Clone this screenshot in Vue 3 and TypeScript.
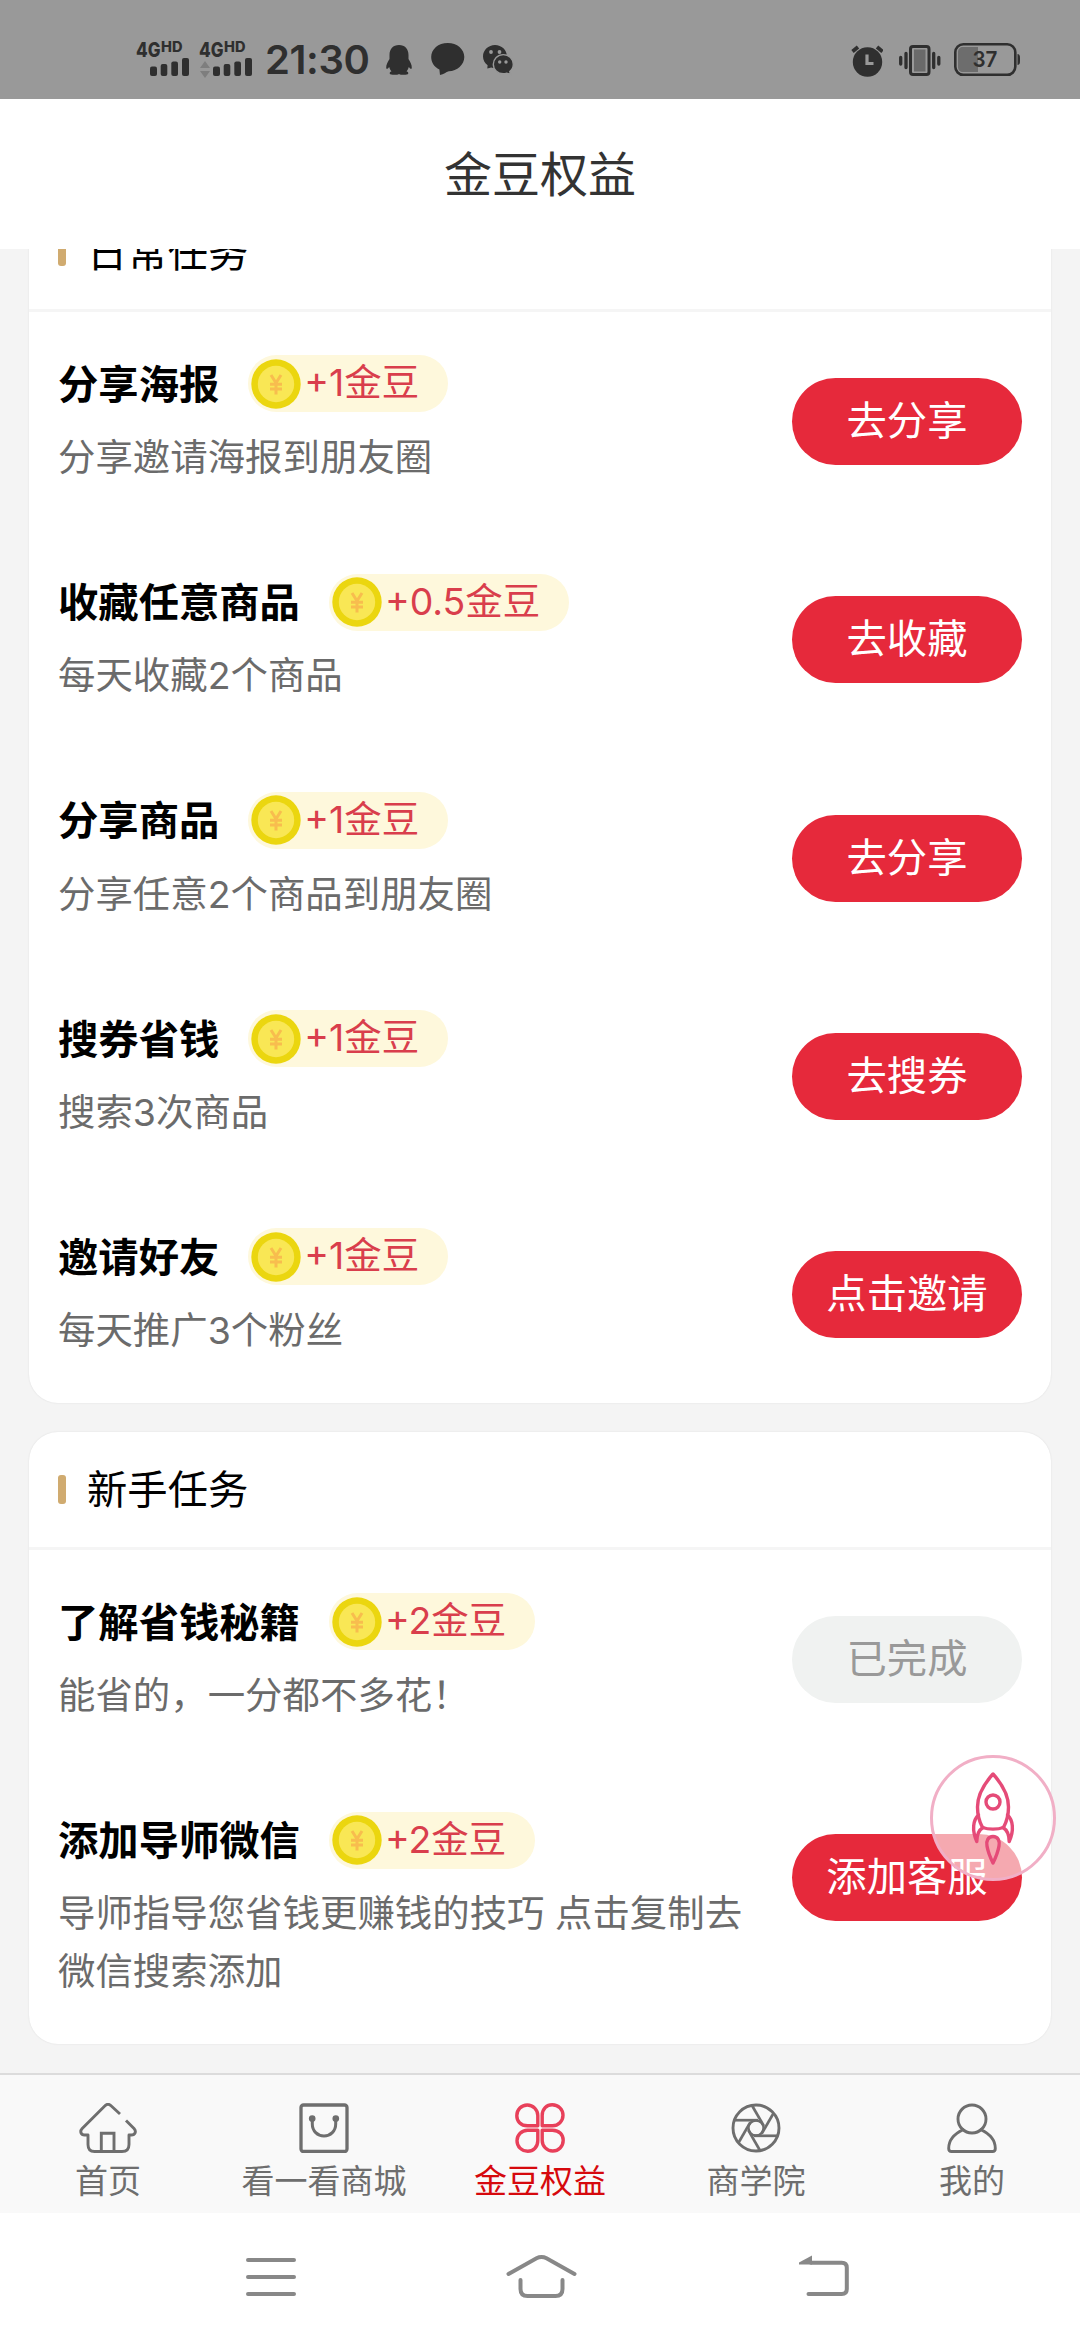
<script setup lang="ts">
interface Task {
  title: string
  reward: string
  desc: string
  action: string
  done?: boolean
}

interface Section {
  name: string
  tasks: Task[]
}

const sections: Section[] = [
  {
    name: '日常任务',
    tasks: [
      { title: '分享海报', reward: '+1金豆', desc: '分享邀请海报到朋友圈', action: '去分享' },
      { title: '收藏任意商品', reward: '+0.5金豆', desc: '每天收藏2个商品', action: '去收藏' },
      { title: '分享商品', reward: '+1金豆', desc: '分享任意2个商品到朋友圈', action: '去分享' },
      { title: '搜券省钱', reward: '+1金豆', desc: '搜索3次商品', action: '去搜券' },
      { title: '邀请好友', reward: '+1金豆', desc: '每天推广3个粉丝', action: '点击邀请' },
    ],
  },
  {
    name: '新手任务',
    tasks: [
      { title: '了解省钱秘籍', reward: '+2金豆', desc: '能省的，一分都不多花！', action: '已完成', done: true },
      { title: '添加导师微信', reward: '+2金豆', desc: '导师指导您省钱更赚钱的技巧 点击复制去微信搜索添加', action: '添加客服' },
    ],
  },
]

const tabs = [
  { id: 'home', label: '首页' },
  { id: 'mall', label: '看一看商城' },
  { id: 'beans', label: '金豆权益' },
  { id: 'school', label: '商学院' },
  { id: 'me', label: '我的' },
]
const activeTab = 'beans'
const petals = [0, 90, 180, 270]
const blades = [0, 60, 120, 180, 240, 300]
</script>

<template>
  <div class="phone">
    <header class="status">
      <svg class="signal" width="116" height="99" viewBox="136 0 116 99">
        <g v-for="dx in [0, 63]" :key="dx" :transform="`translate(${dx} 0)`" fill="#2f2f2f">
          <text x="136" y="56.7" class="net" font-size="20.5" textLength="24.5" lengthAdjust="spacingAndGlyphs">4G</text>
          <text x="161" y="52" class="net" font-size="14" textLength="21.5" lengthAdjust="spacingAndGlyphs">HD</text>
          <rect x="150" y="66.5" width="7" height="9.5" rx="2" />
          <rect x="160.7" y="64" width="6.6" height="12" rx="2" />
          <rect x="171.3" y="61.5" width="6.7" height="14.5" rx="2" />
          <rect x="182" y="58" width="7" height="18" rx="2" />
        </g>
        <path d="M200 68l5-7 5 7zM200 71l5 7 5-7z" fill="#7e7e7e" />
      </svg>
      <span class="clock">21:30</span>
      <svg class="qq" width="26" height="99" viewBox="386 0 26 99" fill="#2f2f2f">
        <path d="M399 45c-6 0-9.500 4-9.500 10v4c-1.500 2.500-3.500 5.500-3.300 9 .2 1.500 1.500 1 3-1 .5 2 1.300 3.300 2.300 4.300-1.500.7-2 1.400-1.700 2.500.3 1.200 7 1.500 9.200.2 2.200 1.300 8.900 1 9.200-.2.3-1.100-.2-1.800-1.700-2.500 1-1 1.800-2.300 2.300-4.300 1.500 2 2.800 2.500 3 1 .2-3.500-1.800-6.500-3.300-9v-4c0-6-3.500-10-9.500-10z" />
      </svg>
      <svg class="bubble" width="34" height="99" viewBox="431 0 34 99" fill="#2f2f2f">
        <path d="M447.700 43c9.400 0 16.600 6.200 16.600 14s-7.200 14-15.500 14.300c-2.800 1-5 2.800-8.800 3.700l-.6-5.500c-5-2.500-8.200-7-8.200-12.500 0-7.800 7.100-14 16.500-14z" />
      </svg>
      <svg class="wechat" width="31" height="99" viewBox="483 0 31 99">
        <path d="M495 45c6.600 0 12 5 12 11.500S501.600 68 495 68c-1.300 0-2.600-.2-3.700-.6l-4 1.100.3-3.200c-2.800-2.200-4.600-5.200-4.600-8.800C483 50 488.400 45 495 45z" fill="#2f2f2f" />
        <circle cx="491" cy="52" r="1.900" fill="#999" />
        <circle cx="499.500" cy="52" r="1.900" fill="#999" />
        <path d="M503.300 54.600c5.700 0 10 4.300 10 9.700 0 3-1.400 5.600-3.500 7.300l.7 2.700-3.700-1.100c-1.100.4-2.300.6-3.500.6-5.700 0-10-4.200-10-9.500s4.300-9.700 10-9.700z" fill="#2f2f2f" stroke="#999" stroke-width="1.400" />
        <circle cx="499.700" cy="62" r="1.700" fill="#999" />
        <circle cx="506" cy="62" r="1.700" fill="#999" />
      </svg>
      <span class="spacer"></span>
      <svg class="alarm" width="32" height="99" viewBox="851 0 32 99">
        <circle cx="867.500" cy="62" r="14.700" fill="#2f2f2f" />
        <path d="M852.500 51.500l5.500-4.500M882.500 51.500l-5.500-4.500" stroke="#2f2f2f" stroke-width="3.800" />
        <path d="M867 54.500v9h6.500" fill="none" stroke="#999" stroke-width="3.200" />
      </svg>
      <svg class="vibrate" width="42" height="99" viewBox="899 0 42 99">
        <rect x="910.500" y="46.500" width="18.500" height="28" rx="2.500" fill="#999" stroke="#2f2f2f" stroke-width="3" />
        <rect x="914" y="49.500" width="11.500" height="22" fill="#6a6a6a" />
        <path d="M906 53.500v14M900.700 57.500v6.500M933.700 53.500v14M938.800 57.500v6.500" stroke="#2f2f2f" stroke-width="3.300" stroke-linecap="round" />
      </svg>
      <svg class="battery" width="67" height="99" viewBox="954 0 67 99">
        <rect x="955.300" y="44.300" width="60" height="30.500" rx="8" fill="none" stroke="#2f2f2f" stroke-width="2.600" />
        <path d="M978 47v25h-15c-3 0-5-2-5-5v-15c0-3 2-5 5-5z" fill="#6d6d6d" />
        <path d="M1017.500 54c2.500.5 2.500 2 2.500 5.500s0 5-2.500 5.500z" fill="#2f2f2f" />
        <text x="972.500" y="67" class="pct" font-size="22" textLength="25" lengthAdjust="spacingAndGlyphs">37</text>
      </svg>
    </header>

    <div class="title-bar"><h1>金豆权益</h1></div>

    <main class="scroll">
      <section v-for="section in sections" :key="section.name" class="card">
        <div class="card-head">
          <i class="mark"></i>
          <h2>{{ section.name }}</h2>
        </div>
        <div v-for="task in section.tasks" :key="task.title" class="task">
          <div class="info">
            <div class="line">
              <h3>{{ task.title }}</h3>
              <span class="badge">
                <svg width="50" height="50" viewBox="0 0 50 50">
                  <circle cx="25" cy="25" r="24.700" fill="#ebd60f" />
                  <circle cx="25" cy="25" r="18.200" fill="#f9e755" />
                  <path d="M20 16l5 8 5-8M25 24v11.500M19 25.200h12M19 30h12" fill="none" stroke="#f8bd4e" stroke-width="3" />
                </svg>
                <span>{{ task.reward }}</span>
              </span>
            </div>
            <p>{{ task.desc }}</p>
          </div>
          <button :class="{ done: task.done }">{{ task.action }}</button>
        </div>
      </section>
    </main>

    <nav class="tabs">
      <a v-for="tab in tabs" :key="tab.id" :class="{ active: tab.id === activeTab }">
        <svg width="58" height="50" viewBox="0 0 58 50" fill="none" stroke="currentColor" stroke-width="2.900" stroke-linecap="round" stroke-linejoin="round">
          <template v-if="tab.id === 'home'">
            <path d="M41 11L31.500 2.300Q29 .300 26.500 2.300L3.200 25.500C.5 28.500 2 32 5.500 32H9v9.500Q9 48.500 15.500 48.500H43Q50 48.500 50 41.500V32h2.500c3.500 0 5.200-3.500 2.500-6.500L47 17.500" stroke-linecap="butt" />
            <path d="M22.300 48V30.300H35V48" stroke-linejoin="miter" />
          </template>
          <template v-else-if="tab.id === 'mall'">
            <rect x="6" y="2" width="46" height="46.500" rx="2.500" stroke-width="3.300" />
            <path d="M17.300 16v5c0 7 5.200 12 11.700 12s11.700-5 11.700-12v-5" stroke-width="3" />
            <circle cx="17.200" cy="15.500" r="2.600" fill="currentColor" stroke-width="1.500" />
            <circle cx="40.800" cy="15.500" r="2.600" fill="currentColor" stroke-width="1.500" />
          </template>
          <template v-else-if="tab.id === 'beans'">
            <path v-for="r in petals" :key="r" :transform="`rotate(${r} 29 25)`" d="M26.800 22.800H16.500C9.500 22.800 5.800 18 5.800 12.800 5.800 6.500 10.500 2 16.300 2s10.500 4.800 10.500 10.500z" stroke="#e8405a" stroke-width="3.400" />
          </template>
          <template v-else-if="tab.id === 'school'">
            <circle cx="29" cy="25" r="23" />
            <circle cx="29" cy="25" r="7.500" stroke-width="2.400" />
            <path v-for="r in blades" :key="r" :transform="`rotate(${r} 29 25)`" d="M7.500 17.200H31" stroke-linecap="butt" stroke-width="2.700" />
          </template>
          <template v-else>
            <circle cx="29" cy="16" r="14" />
            <path d="M20 26.800C11 31 5.700 38 5.700 45.500Q5.700 48.500 8.500 48.500H49.500Q52.300 48.500 52.300 45.500C52.300 38 47 31 38 26.800" />
          </template>
        </svg>
        <span>{{ tab.label }}</span>
      </a>
    </nav>

    <footer class="system-nav">
      <svg width="50" height="127" viewBox="0 0 50 127">
        <path d="M2 47h46M2 64h46M2 81h46" />
      </svg>
      <svg width="71" height="127" viewBox="0 0 71 127">
        <path d="M2.500 61L30.500 45.200Q35.500 42.800 40.500 45.200L68.500 61M14.500 67v9Q14.500 83 21.500 83H49.500Q56.500 83 56.500 76v-9" />
      </svg>
      <svg width="53" height="127" viewBox="0 0 53 127">
        <path d="M14 49.700H44.800Q49.800 49.700 49.800 54.700V76Q49.800 81 44.800 81H11.500" />
        <path d="M2 49.500l13-7v9H2z" fill="#888" stroke="none" />
      </svg>
    </footer>

    <div class="rocket">
      <svg width="120" height="120" viewBox="0 0 120 120" fill="none" stroke="#e54b78" stroke-width="3.400" stroke-linejoin="round" stroke-linecap="round">
        <path d="M60 16C50 27 44.500 38 44.500 49c0 8 2 15 5 20.500 6 2.200 15 2.200 21 0 3-5.500 5-12.500 5-20.500C75.500 38 70 27 60 16z" />
        <circle cx="60" cy="44" r="7" />
        <path d="M45.500 57C40 62 38.700 72 43.800 83.500 43.800 77 46 72 50 69.500M74.500 57C80 62 81.300 72 76.200 83.500 76.200 77 74 72 70 69.500" />
        <path d="M60 78.500c-5 0-7 4.500-6 9.500 1 6 3.500 12 6 17 2.500-5 5-11 6-17 1-5-1-9.500-6-9.500z" />
      </svg>
    </div>
  </div>
</template>

<style>
body {
  margin: 0;
  background: #fff;
}
</style>

<style scoped>
.phone {
  position: relative;
  width: 1080px;
  height: 2340px;
  display: flex;
  flex-direction: column;
  overflow: hidden;
  background: #f4f4f4;
  font-family: Inter, "Noto Sans CJK SC", sans-serif;
}

h1,
h2,
h3,
p {
  margin: 0;
  font-weight: 400;
}

svg {
  display: block;
  flex: none;
}

/* system status bar */
.status {
  flex: none;
  height: 99px;
  box-sizing: border-box;
  display: flex;
  align-items: center;
  padding: 0 59px 0 136px;
  background: #999;
}

.net {
  font-weight: 800;
}

.clock {
  box-sizing: border-box;
  width: 106px;
  height: 99px;
  margin-left: 13px;
  padding-top: 20px;
  font-size: 40px;
  line-height: 79px;
  font-weight: 600;
  letter-spacing: -0.4px;
  color: #2f2f2f;
  white-space: nowrap;
}

.qq {
  margin-left: 15px;
}

.bubble {
  margin-left: 19px;
}

.wechat {
  margin-left: 18px;
}

.spacer {
  flex: 1;
}

.vibrate {
  margin-left: 16px;
}

.battery {
  margin-left: 13px;
}

.pct {
  font-weight: 600;
  fill: #2f2f2f;
}

/* page title */
.title-bar {
  flex: none;
  height: 150px;
  box-sizing: border-box;
  display: flex;
  align-items: center;
  justify-content: center;
  padding-bottom: 6px;
  background: #fff;
}

.title-bar h1 {
  font-size: 48px;
  color: #333;
}

/* task cards */
.scroll {
  flex: none;
  height: 1824px;
  overflow: hidden;
}

.card {
  margin: 0 29px 29px;
  border-radius: 29px;
  background: #fff;
  box-shadow: 0 0 2px rgba(0, 0, 0, 0.1);
}

.card:first-child {
  margin-top: -55px;
}

.card-head {
  height: 115px;
  display: flex;
  align-items: center;
  padding-left: 29px;
  border-bottom: 3px solid #f5f5f5;
}

.mark {
  width: 8px;
  height: 29px;
  border-radius: 3px;
  background: #d0ab70;
}

.card-head h2 {
  margin-left: 21px;
  padding-bottom: 5px;
  font-size: 40.32px;
  color: #000;
}

.task {
  display: flex;
  justify-content: space-between;
  align-items: flex-start;
  padding: 43.2px 29px 43.3px;
}

.info {
  width: 690px;
}

.line {
  display: flex;
  align-items: center;
  height: 57.6px;
}

.line h3 {
  padding-bottom: 5px;
  font-size: 40.32px;
  font-weight: 700;
  color: #000;
}

.badge {
  display: flex;
  align-items: center;
  height: 57px;
  box-sizing: border-box;
  margin-left: 29px;
  padding: 0 29px 0 3px;
  border-radius: 29px;
  background: #fef8dc;
  font-size: 37.44px;
  line-height: 56px;
  color: #d93e4c;
  white-space: nowrap;
}

.badge span {
  margin-left: 3px;
  padding-bottom: 1px;
}

.info p {
  margin-top: 16.5px;
  font-size: 37.44px;
  line-height: 57.6px;
  color: #6b6b6b;
}

button {
  flex: none;
  width: 230px;
  height: 87px;
  margin-top: 23px;
  padding: 0 0 2px;
  border: 0;
  border-radius: 44px;
  background: #e6293b;
  color: #fff;
  font-family: inherit;
  font-size: 40.32px;
  line-height: 85px;
}

button.done {
  background: #f0f2f1;
  color: #999;
}

/* tab bar */
.tabs {
  flex: none;
  height: 140px;
  box-sizing: border-box;
  display: flex;
  border-top: 2px solid #dcdcdc;
  background: #f9f9f9;
}

.tabs a {
  flex: 1;
  display: flex;
  flex-direction: column;
  align-items: center;
  padding-top: 28px;
  color: #6e6e6e;
}

.tabs span {
  margin-top: 3px;
  font-size: 33px;
  line-height: 50px;
}

.tabs .active {
  color: #d6090d;
}

/* system navigation keys */
.system-nav {
  flex: none;
  height: 127px;
  display: flex;
  padding-left: 246px;
  background: #fff;
  fill: none;
  stroke: #888;
  stroke-width: 4px;
  stroke-linecap: round;
}

.system-nav svg + svg {
  margin-left: 210px;
}

.system-nav svg:last-child {
  margin-left: 220px;
}

/* floating rocket shortcut */
.rocket {
  position: absolute;
  left: 930px;
  top: 1755px;
  box-sizing: border-box;
  width: 126px;
  height: 126px;
  border: 3px solid #f1afc6;
  border-radius: 50%;
  background: rgba(255, 255, 255, 0.6);
}
</style>
